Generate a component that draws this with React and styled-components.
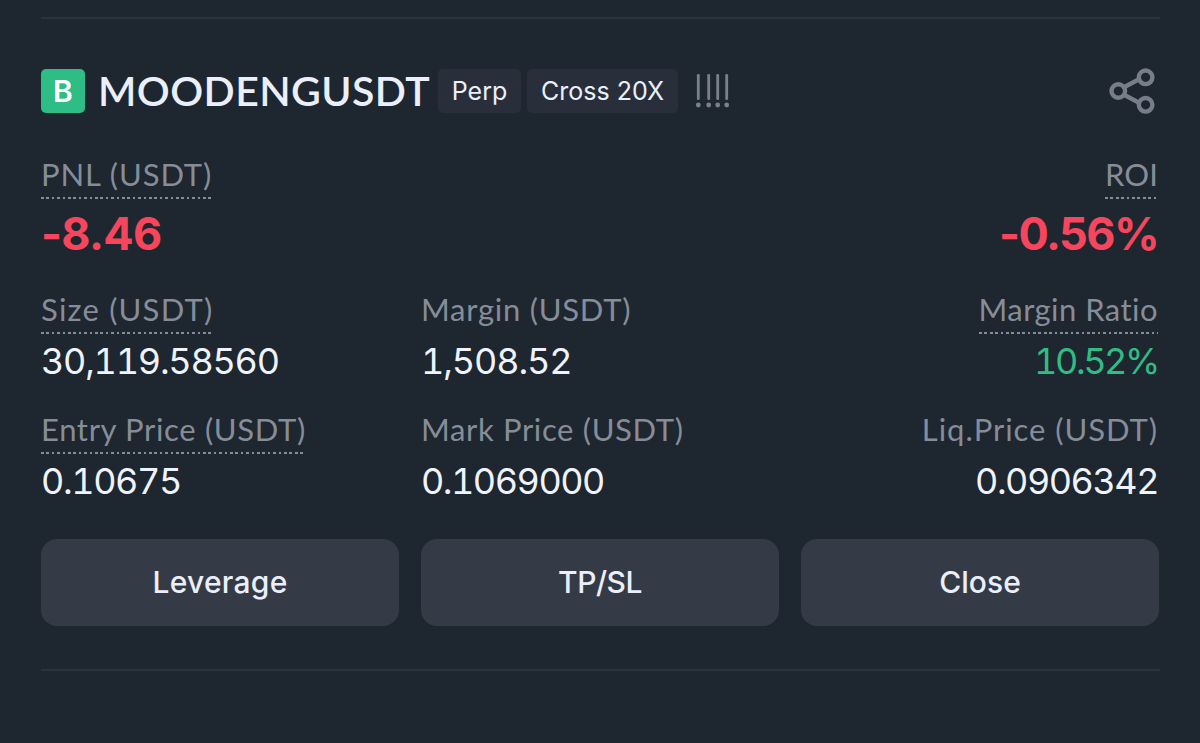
import React from "react";
import styled, { createGlobalStyle } from "styled-components";

const GlobalStyle = createGlobalStyle`
  body {
    margin: 0;
    background: #1e262f;
  }
  * {
    box-sizing: border-box;
  }
`;

const Page = styled.div`
  display: flex;
  flex-direction: column;
  height: 743px;
  padding: 17px 41px 0;
  overflow: hidden;
  background: #1e262f;
  color: #eaeffb;
  font-family: Inter, "Open Sans", sans-serif;
`;

const Divider = styled.div`
  height: 2px;
  flex-shrink: 0;
  margin-right: -1px;
  background: #2b323c;
`;

const HeaderRow = styled.div`
  display: flex;
  align-items: center;
  height: 44px;
  margin-top: 50px;
`;

const SideBadge = styled.div`
  display: flex;
  align-items: center;
  justify-content: center;
  width: 44px;
  height: 44px;
  border-radius: 5px;
  background: #2ebd85;
  color: #fff;
  font-size: 30px;
  font-weight: 600;
  line-height: 44px;
`;

const Symbol = styled.h1`
  width: 340px;
  margin: 0 0 0 13px;
  font-family: Lato, sans-serif;
  font-size: 41px;
  font-weight: 600;
  line-height: 46px;
  letter-spacing: 0.4px;
  white-space: nowrap;
`;

const Tag = styled.span`
  flex-shrink: 0;
  width: ${({ $width }) => $width}px;
  height: 44px;
  margin-left: ${({ $gap }) => $gap}px;
  border-radius: 5px;
  background: #292f3a;
  font-size: 25px;
  line-height: 45px;
  text-align: center;
  white-space: nowrap;
`;

const RiskIcon = styled.svg`
  margin-left: 17px;
`;

const ShareIcon = styled.svg`
  margin-left: auto;
  margin-right: 4px;
`;

const Row = styled.div`
  display: grid;
  grid-template-columns: repeat(3, 1fr);
  column-gap: 22px;
  margin-top: ${({ $top }) => $top}px;
`;

const Cell = styled.div`
  display: flex;
  flex-direction: column;
  align-items: ${({ $right }) => ($right ? "flex-end" : "flex-start")};
  margin-right: ${({ $right }) => ($right ? "1px" : 0)};
`;

const Label = styled.div`
  height: 41px;
  color: #868d99;
  font-family: Lato, sans-serif;
  font-size: 31px;
  line-height: 32px;
  letter-spacing: ${({ $track }) => $track}px;
  white-space: nowrap;
  background: ${({ $dotted }) =>
    $dotted
      ? "repeating-linear-gradient(90deg, #868d99 0 2.7px, transparent 2.7px 5.4px) left bottom / 100% 2px no-repeat"
      : "none"};
`;

const Value = styled.div`
  margin-top: 7px;
  color: ${({ $color }) => $color || "#eef3fd"};
  font-size: 36px;
  font-weight: 400;
  line-height: 40px;
  font-variant-numeric: tabular-nums;
  letter-spacing: ${({ $track }) => $track}px;
  white-space: nowrap;
`;

const BigValue = styled(Value)`
  margin-top: 10px;
  margin-bottom: -1px;
  color: #f6465d;
  font-size: 45px;
  font-weight: 700;
  line-height: 50px;
  font-variant-numeric: normal;
`;

const Actions = styled(Row)`
  margin-top: 38px;
  margin-bottom: 43px;
`;

const ActionButton = styled.button`
  height: 87px;
  padding: 0;
  border: 0;
  border-radius: 16px;
  background: #353b46;
  color: #eaeffb;
  font: 500 30px/87px Inter, sans-serif;
  letter-spacing: ${({ $track }) => $track}px;
`;

const stats = [
  [
    { label: "Size (USDT)", track: 1.2, value: "30,119.58560", valueTrack: -1.25, dotted: true },
    { label: "Margin (USDT)", track: 0.75, value: "1,508.52", valueTrack: -1.1 },
    { label: "Margin Ratio", track: 0.46, value: "10.52%", valueTrack: -2.4, dotted: true, color: "#2ebd85" },
  ],
  [
    { label: "Entry Price (USDT)", track: 0.66, value: "0.10675", valueTrack: -1.4, dotted: true },
    { label: "Mark Price (USDT)", track: 0.65, value: "0.1069000", valueTrack: -1.5 },
    { label: "Liq.Price (USDT)", track: 0.95, value: "0.0906342", valueTrack: -1.5 },
  ],
];

const bars = [1.9, 12.3, 21.3, 30.3];

const App = () => {
  return (
    <Page>
      <GlobalStyle />
      <Divider />
      <HeaderRow>
        <SideBadge>B</SideBadge>
        <Symbol>MOODENGUSDT</Symbol>
        <Tag $width={83} $gap={0}>Perp</Tag>
        <Tag $width={151} $gap={6}>Cross 20X</Tag>
        <RiskIcon width="36" height="36" viewBox="0 0 36 36">
          {bars.map((x) => (
            <g key={x} fill="#7a808c">
              <rect x={x} y="1" width="2.8" height="26" rx="1.2" />
              <circle cx={x + 1.4} cy="32" r="2.4" />
            </g>
          ))}
        </RiskIcon>
        <ShareIcon width="46" height="46" viewBox="0 0 46 46" fill="none" stroke="#777d89" strokeWidth="4.4">
          <circle cx="9.3" cy="23" r="6.8" />
          <circle cx="36.6" cy="9.3" r="6.8" />
          <circle cx="36.6" cy="36.8" r="6.8" />
          <path d="M15 19.2 31 10.8M15 26.8 31 35.2" />
        </ShareIcon>
      </HeaderRow>
      <Row $top={45}>
        <Cell>
          <Label $track={0.9} $dotted>PNL (USDT)</Label>
          <BigValue $track={-0.7}>-8.46</BigValue>
        </Cell>
        <Cell />
        <Cell $right>
          <Label $track={0.1} $dotted>ROI</Label>
          <BigValue $track={-1.6}>-0.56%</BigValue>
        </Cell>
      </Row>
      {stats.map((row, i) => (
        <Row key={i} $top={i === 0 ? 35 : 32}>
          {row.map((item, j) => (
            <Cell key={item.label} $right={j === 2}>
              <Label $track={item.track} $dotted={item.dotted}>{item.label}</Label>
              <Value $track={item.valueTrack} $color={item.color}>{item.value}</Value>
            </Cell>
          ))}
        </Row>
      ))}
      <Actions>
        <ActionButton $track={0.25}>Leverage</ActionButton>
        <ActionButton $track={-0.5}>TP/SL</ActionButton>
        <ActionButton $track={0.05}>Close</ActionButton>
      </Actions>
      <Divider />
    </Page>
  );
};

export default App;
